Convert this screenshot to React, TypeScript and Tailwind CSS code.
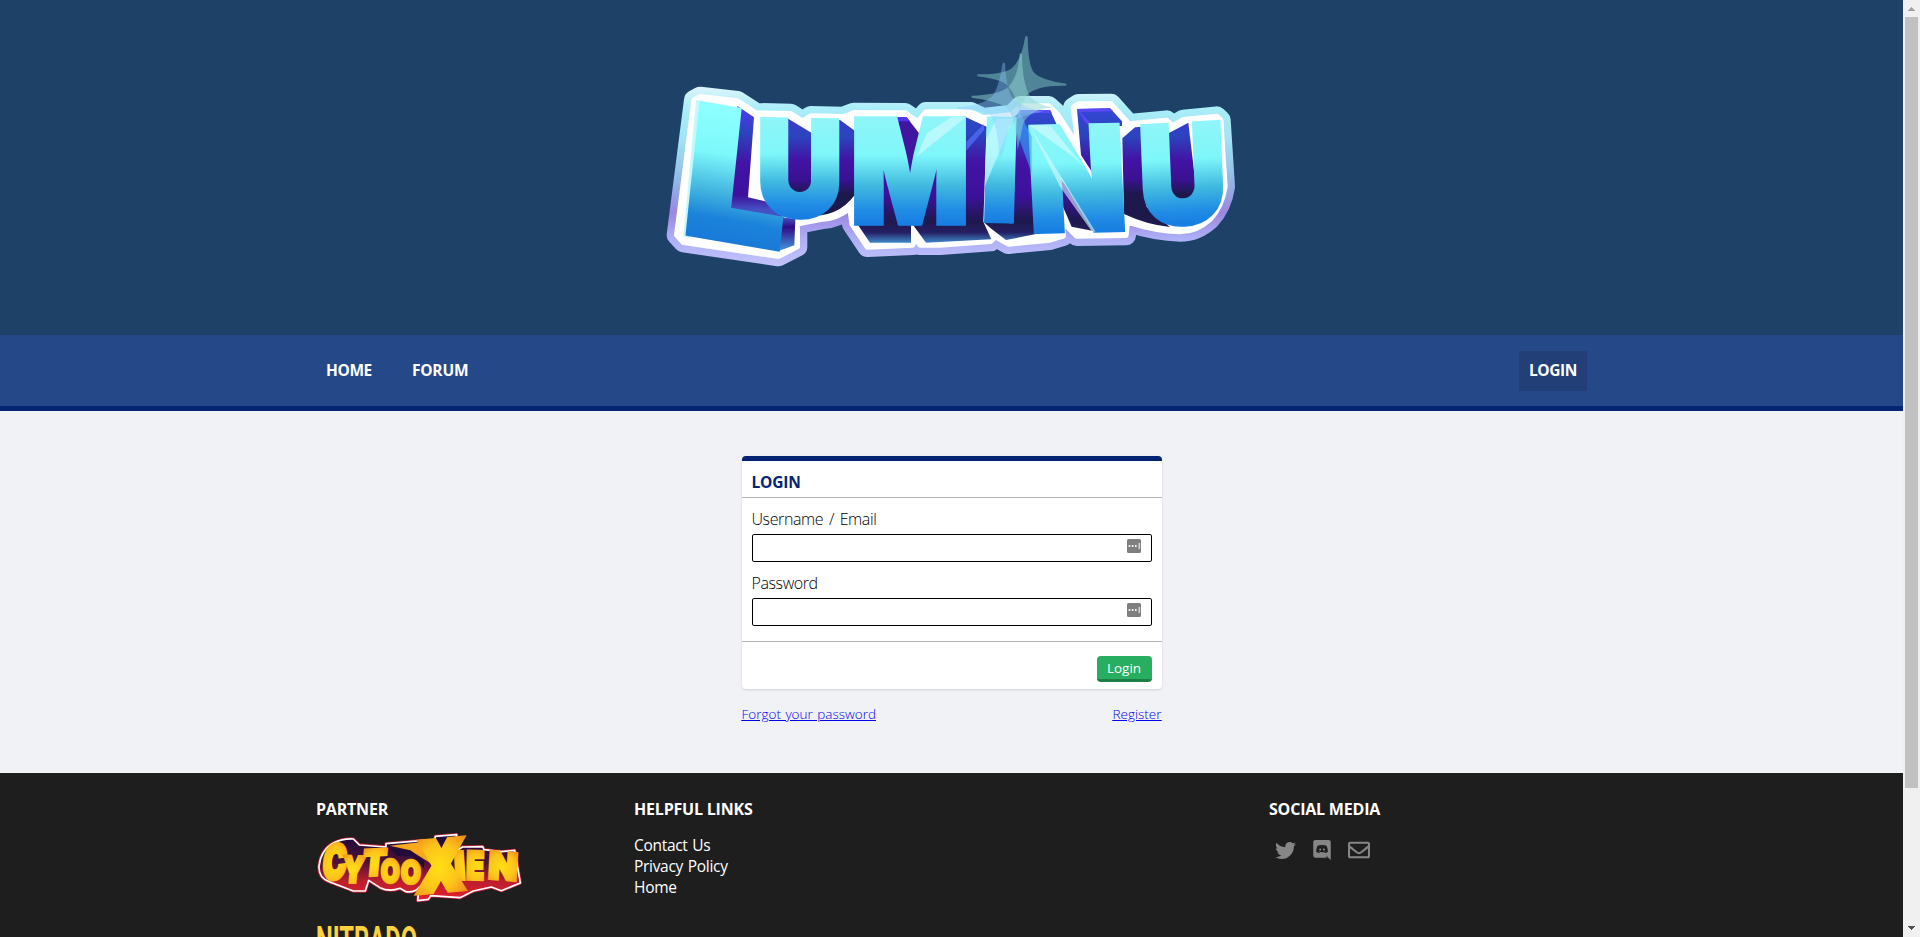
import { FaTwitter, FaRegEnvelope } from "react-icons/fa";

const PLATE =
  "M150 230 L262 243 L318 279 L422 281 L458 304 L482 288 L580 290 L612 278 L765 279 L803 305 L828 276 L962 276 L1000 294 L1085 284 L1112 258 L1196 258 L1222 282 L1285 380 L1270 262 L1285 252 L1383 251 L1437 312 L1550 301 L1568 318 L1600 299 L1700 289 L1712 300 L1725 500 Q1716 560 1680 598 Q1640 635 1590 635 Q1520 634 1432 606 L1428 646 L1280 648 L1236 604 L1240 648 L1200 660 L1075 672 L1036 650 L1022 664 L870 675 L810 675 L800 655 L788 675 L652 681 L606 612 L600 565 Q560 595 520 597 L442 612 L442 680 L385 709 L100 667 L80 645 L132 240 Z";

type Glyph = { c: string; m: string; fill: string };

const luminu: Glyph[] = [
  { c: "L", m: "matrix(0.96 0.165 -0.1 0.95 93 634)", fill: "url(#faceL)" },
  { c: "U", m: "matrix(0.64 0.01 0 0.71 321 586)", fill: "url(#face)" },
  { c: "M", m: "matrix(0.67 0 0 0.77 602 608)", fill: "url(#face)" },
  { c: "I", m: "matrix(0.68 0.01 -0.02 0.75 992 601)", fill: "url(#face)" },
  { c: "N", m: "matrix(0.69 -0.015 0.04 0.77 1141 634)", fill: "url(#face)" },
  { c: "U", m: "matrix(0.65 -0.035 0.03 0.73 1473 616)", fill: "url(#face)" },
];

function LuminuLogo() {
  return (
    <svg className="h-[260px] w-[600px] overflow-visible" viewBox="0 0 1800 780" role="img" aria-label="Luminu">
      <defs>
        <linearGradient id="rim" x1="0" y1="200" x2="0" y2="740" gradientUnits="userSpaceOnUse">
          <stop offset="0" stopColor="#dff4fb" />
          <stop offset=".12" stopColor="#a9eef8" />
          <stop offset=".3" stopColor="#a0e2f4" />
          <stop offset=".5" stopColor="#92bdea" />
          <stop offset=".7" stopColor="#9a86e0" />
          <stop offset=".85" stopColor="#aeb0f7" />
          <stop offset="1" stopColor="#c3c4fa" />
        </linearGradient>
        <linearGradient id="faceL" x1="0" y1="-404" x2="0" y2="0" gradientUnits="userSpaceOnUse">
          <stop offset="0" stopColor="#8dffff" />
          <stop offset=".35" stopColor="#7df8fb" />
          <stop offset=".65" stopColor="#42b4df" />
          <stop offset=".85" stopColor="#1b83db" />
          <stop offset="1" stopColor="#197bd8" />
        </linearGradient>
        <linearGradient id="face" x1="0" y1="-404" x2="0" y2="0" gradientUnits="userSpaceOnUse">
          <stop offset="0" stopColor="#8ff5f8" />
          <stop offset=".35" stopColor="#7ef7fa" />
          <stop offset=".65" stopColor="#3fb8e0" />
          <stop offset=".88" stopColor="#218ce5" />
          <stop offset="1" stopColor="#187fe2" />
        </linearGradient>
        <linearGradient id="side" x1="0" y1="260" x2="0" y2="670" gradientUnits="userSpaceOnUse">
          <stop offset="0" stopColor="#3546d8" />
          <stop offset=".2" stopColor="#2b45bd" />
          <stop offset=".4" stopColor="#4213a5" />
          <stop offset=".65" stopColor="#3d119c" />
          <stop offset=".84" stopColor="#1d194d" />
          <stop offset=".92" stopColor="#241f63" />
          <stop offset="1" stopColor="#3f8fd0" />
        </linearGradient>
        <linearGradient id="sideU" x1="0" y1="290" x2="0" y2="580" gradientUnits="userSpaceOnUse">
          <stop offset="0" stopColor="#3f36d0" />
          <stop offset=".2" stopColor="#2b45bd" />
          <stop offset=".45" stopColor="#4213a5" />
          <stop offset=".65" stopColor="#3a1191" />
          <stop offset=".8" stopColor="#1d194d" />
          <stop offset="1" stopColor="#1d194d" />
        </linearGradient>
        <linearGradient id="sideL" x1="0" y1="260" x2="0" y2="690" gradientUnits="userSpaceOnUse">
          <stop offset="0" stopColor="#5238f4" />
          <stop offset=".18" stopColor="#2b45bd" />
          <stop offset=".4" stopColor="#4213a5" />
          <stop offset=".62" stopColor="#3d119c" />
          <stop offset=".72" stopColor="#4552c4" />
          <stop offset=".77" stopColor="#4552c4" />
          <stop offset=".84" stopColor="#300b86" />
          <stop offset="1" stopColor="#4593d8" />
        </linearGradient>
      </defs>
      <path d={PLATE} fill="url(#rim)" stroke="url(#rim)" strokeWidth="60" strokeLinejoin="round" />
      <path d={PLATE} fill="#fff" stroke="#fff" strokeWidth="16" strokeLinejoin="round" />
      <g fill="url(#sideL)">
        <path d="M262 258 L312 292 L294 532 L350 545 L410 600 L220 572 Z" />
        <path d="M375 590 L436 596 L433 676 L388 692 Z" />
      </g>
      <g fill="url(#sideU)">
        <path d="M412 295 L484 338 V520 H405 Z" />
        <path d="M562 300 H570 L635 347 L627 505 Q580 588 490 587 L550 480 Z" />
        <path d="M1417 355 L1455 322 L1480 320 L1490 560 L1560 621 Q1490 614 1422 582 Z" />
        <path d="M1540 348 L1615 308 L1640 520 Q1595 570 1550 530 Z" />
      </g>
      <path d="M700 292 H770 L809 342 L782 470 Z" fill="#40159f" />
      <path d="M700 292 H770 L780 304 H715 Z" fill="#5432f0" />
      <g fill="url(#side)">
        <path d="M1281 267 L1380 265 L1416 304 L1416 318 L1330 318 L1335 470 L1293 405 Z" />
        <path d="M622 612 L706 440 L783 605 V668 H660 Z" />
        <path d="M860 440 L940 500 L940 288 L1010 320 L1000 605 L1024 658 L828 668 L787 612 Z" />
        <path d="M1090 293 L1116 270 L1200 270 L1222 318 L1140 318 L1170 640 L1068 660 L1022 625 L1000 605 L1086 610 Z" />
        <path d="M1228 470 L1345 636 L1265 620 L1230 540 Z" />
      </g>
      <path d="M1110 270 H1200 L1206 279 H1108 Z M1281 267 L1380 265 L1390 274 L1290 276 L1325 312 L1310 312 Z" fill="#5a48f5" />
      <path d="M138 240 L160 243 L120 654 L100 650 Z" fill="#c4f9fb" />
      <g fontFamily="Inter, 'Liberation Sans', sans-serif" fontWeight="900" fontSize="555">
        {luminu.map((g, i) => (
          <text key={i} transform={g.m} fill={g.fill} stroke={g.fill} strokeWidth="22">
            {g.c}
          </text>
        ))}
      </g>
      <g fill="#d9fbff" opacity=".6">
        <path d="M800 410 L947 292 H905 L830 340 Z" />
        <path d="M1004 500 L1090 296 H1040 L1008 360 Z" />
        <path d="M1138 316 H1200 L1310 450 L1270 410 Z" />
        <path d="M1140 320 L1337 636 L1325 634 L1230 500 Z" />
      </g>
      <path d="M1106 270 L1145 350 V460 L1098 330 Z" fill="#39a5ff" opacity=".6" />
      <path d="M949 365 L1002 312 V330 L949 392 Z" fill="#5572ff" opacity=".7" />
      <g fill="#8fd6d2" opacity=".45">
        <path d="M1126 48 L1133 50 Q1134 130 1150 155 Q1170 180 1250 191 L1248 197 Q1160 195 1130 225 L1108 270 Q1092 210 1065 190 Q1040 176 982 169 V163 Q1060 164 1085 145 Q1115 120 1126 48 Z" />
      </g>
      <path
        d="M1109 100 L1116 102 Q1117 190 1140 230 Q1165 256 1210 262 Q1140 268 1120 310 L1103 390 Q1096 290 1070 262 Q1030 240 965 233 V227 Q1050 224 1075 200 Q1105 170 1109 100 Z"
        fill="#8fd6d2"
        opacity=".5"
      />
      <path
        d="M1058 128 H1065 Q1068 200 1085 230 Q1110 262 1180 275 Q1100 285 1078 320 L1054 410 L1048 408 Q1042 310 1020 284 Q980 268 920 266 V262 Q1000 258 1030 225 Q1050 190 1058 128 Z"
        fill="#8cc8ff"
        opacity=".38"
      />
    </svg>
  );
}

const cyto: { c: string; m: string }[] = [
  { c: "C", m: "matrix(0.96 -0.14 -0.06 1.42 67 347)" },
  { c: "Y", m: "matrix(0.86 0.02 -0.1 1.08 124 352)" },
  { c: "T", m: "matrix(1.02 -0.04 -0.1 1.08 185 333)" },
  { c: "O", m: "matrix(0.74 0 0 0.98 242 354)" },
  { c: "O", m: "matrix(0.78 0 0 1 302 356)" },
  { c: "I", m: "matrix(1.1 0.03 0.08 1.15 466 343)" },
  { c: "E", m: "matrix(0.88 0.02 -0.02 1.16 498 343)" },
  { c: "N", m: "matrix(1.14 0.1 -0.06 1.12 563 340)" },
  { c: "X", m: "matrix(1.82 -0.16 -0.02 2.08 351 383)" },
];

const CYTO_PLATE =
  "M160 222 L178 240 L258 246 L258 236 L372 226 L380 232 L404 230 L406 214 L470 209 L462 262 L488 246 L548 245 L552 254 L604 260 L644 256 L661 354 L604 377 L574 366 L520 378 L480 398 L392 392 L385 403 L353 407 L358 366 Q344 384 318 380 L300 370 Q268 382 240 368 L206 346 L196 378 L160 378 L88 350 Q56 340 57 304 Q62 256 100 234 Q130 220 160 222 Z";

function CytooxienLogo() {
  return (
    <svg className="h-[70px] w-[208px] overflow-visible" viewBox="48 204 624 210" role="img" aria-label="Cytooxien">
      <defs>
        <radialGradient id="gold" cx="36" cy="-34" r="60" gradientUnits="userSpaceOnUse">
          <stop offset="0" stopColor="#ffdf14" />
          <stop offset=".55" stopColor="#fdc41a" />
          <stop offset="1" stopColor="#f08a1d" />
        </radialGradient>
        <linearGradient id="red" x1="0" y1="220" x2="0" y2="400" gradientUnits="userSpaceOnUse">
          <stop offset="0" stopColor="#220a3a" />
          <stop offset=".4" stopColor="#4c1238" />
          <stop offset=".7" stopColor="#b81d2e" />
          <stop offset="1" stopColor="#e4202c" />
        </linearGradient>
      </defs>
      <path d={CYTO_PLATE} fill="#c8202f" stroke="#b91c34" strokeWidth="10" strokeLinejoin="round" />
      <path d={CYTO_PLATE} fill="url(#red)" stroke="#fff" strokeWidth="5" strokeLinejoin="round" />
      <path d="M270 242 L372 230 L400 300 L330 256 Z" fill="#f9a91b" />
      <path d="M272 250 L330 256 L372 288 V310 L340 275 L290 272 Z" fill="#220a3a" />
      <g
        fontFamily="Inter, 'Liberation Sans', sans-serif"
        fontWeight="900"
        fontSize="100"
        fill="url(#gold)"
        stroke="url(#gold)"
        strokeWidth="8"
      >
        {cyto.map((g, i) => (
          <text key={i} transform={g.m}>
            {g.c}
          </text>
        ))}
      </g>
    </svg>
  );
}

function DiscordIcon() {
  return (
    <svg className="h-5 w-[18px]" viewBox="0 0 448 512" fill="currentColor">
      <path d="M297.216 243.2c0 15.616-11.52 28.416-26.112 28.416-14.336 0-26.112-12.8-26.112-28.416s11.52-28.416 26.112-28.416c14.592 0 26.112 12.8 26.112 28.416zm-119.552-28.416c-14.592 0-26.112 12.8-26.112 28.416s11.776 28.416 26.112 28.416c14.592 0 26.112-12.8 26.112-28.416.256-15.616-11.52-28.416-26.112-28.416zM448 52.736V512c-64.494-56.994-43.868-38.128-118.784-107.776l13.568 47.36H52.48C23.552 451.584 0 428.032 0 398.848V52.736C0 23.552 23.552 0 52.48 0h343.04C424.448 0 448 23.552 448 52.736zm-72.96 242.688c0-82.432-36.864-149.248-36.864-149.248-36.864-27.648-71.936-26.88-71.936-26.88l-3.584 4.096c43.52 13.312 63.744 32.512 63.744 32.512-60.811-33.329-132.244-33.335-191.232-7.424-9.472 4.352-15.104 7.424-15.104 7.424s21.248-20.224 67.328-33.536l-2.56-3.072s-35.072-.768-71.936 26.88c0 0-36.864 66.816-36.864 149.248 0 0 21.504 37.12 78.08 38.912 0 0 9.472-11.52 17.152-21.248-32.512-9.728-44.8-30.208-44.8-30.208 3.766 2.636 9.976 6.053 10.496 6.4 43.21 24.198 104.588 32.126 159.744 8.96 8.96-3.328 18.944-8.192 29.44-15.104 0 0-12.8 20.992-46.336 30.464 7.68 9.728 16.896 20.736 16.896 20.736 56.576-1.792 78.336-38.912 78.336-38.912z" />
    </svg>
  );
}

function PasswordManagerIcon() {
  return (
    <svg className="mt-1 size-3.5" viewBox="0 0 14 14">
      <rect width="14" height="14" rx="1.5" fill="#7f7f7f" />
      <circle cx="2.5" cy="7" r="1" fill="#fff" />
      <circle cx="5.6" cy="7" r="1" fill="#fff" />
      <circle cx="8.8" cy="7" r="1" fill="#fff" />
      <path d="M12.2 4v6" stroke="#fff" strokeWidth="1" />
    </svg>
  );
}

function Field({ label }: { label: string }) {
  return (
    <label className="block h-16">
      <span className="block h-[27px] text-[16px] leading-6 font-light tracking-[-0.4px] text-black [word-spacing:2px]">
        {label}
      </span>
      <span className="flex h-7 justify-end rounded-[2px] border border-black bg-white pr-2.5">
        <PasswordManagerIcon />
      </span>
    </label>
  );
}

function FooterHeading({ children }: { children: string }) {
  return (
    <h2 className="h-[21px] text-[16px] leading-[21px] font-bold tracking-[-0.2px] whitespace-nowrap">{children}</h2>
  );
}

function Scrollbar() {
  return (
    <div className="flex h-full w-[17px] flex-col items-center bg-[#f0f0f0]">
      <svg className="h-[17px] w-[17px]" viewBox="0 0 17 17" shapeRendering="crispEdges">
        <path d="M5 11h7v-1h-1v-1h-1v-1h-1v-1h-1v1h-1v1h-1v1h-1z" fill="#a3a3a3" />
      </svg>
      <div className="h-[771px] w-[13px] bg-[#c1c1c1]" />
      <div className="flex-1" />
      <svg className="h-[17px] w-[17px]" viewBox="0 0 17 17" shapeRendering="crispEdges">
        <path d="M5 6h7v1h-1v1h-1v1h-1v1h-1v-1h-1v-1h-1v-1h-1z" fill="#505050" />
      </svg>
    </div>
  );
}

export default function App() {
  return (
    <div className="flex h-[937px] w-[1920px] overflow-hidden font-['Open_Sans','Noto_Sans',sans-serif]">
      <div className="flex h-full w-[1903px] flex-col overflow-hidden bg-[#f0f2f6]">
        <header className="flex h-[335px] shrink-0 justify-center bg-[#1e4167] pt-5">
          <div className="h-[260px] w-[603px]">
            <LuminuLogo />
          </div>
        </header>
        <nav className="h-[76px] shrink-0 border-b-[5px] border-[#052573] bg-[#254988] px-[316px]">
          <div className="flex h-full items-center text-[15.5px] font-bold tracking-[-0.4px] text-white">
            <a className="flex h-10 items-center px-2.5">HOME</a>
            <a className="ml-5 flex h-10 items-center px-2.5 tracking-[-0.2px]">FORUM</a>
            <a className="ml-auto flex h-10 w-[68px] items-center justify-center bg-[#233f78]">LOGIN</a>
          </div>
        </nav>
        <main className="flex h-[362px] shrink-0 flex-col items-center pt-[45px]">
          <section className="h-[233px] w-[420px] rounded border-t-[5px] border-[#052573] bg-white shadow-sm">
            <h1 className="h-[37px] border-b border-[#b4b4b4] px-2.5 pt-[11px] text-[15.5px] leading-[21px] font-bold tracking-[-0.2px] text-[#052573]">
              LOGIN
            </h1>
            <div className="h-[143px] px-2.5 pt-[9px]">
              <Field label="Username / Email" />
              <Field label="Password" />
            </div>
            <div className="flex justify-end border-t border-[#b4b4b4] px-2.5 pt-3.5">
              <button className="h-[26px] w-[55px] rounded border-b-[3px] border-[#1d7f46] bg-[#27ae60] text-[13.5px] leading-[22px] text-white">
                Login
              </button>
            </div>
          </section>
          <div className="mt-3.5 flex w-[420px] justify-between text-[13.5px] leading-[22px] font-light text-[#0000ee] underline [word-spacing:1px]">
            <a>Forgot your password</a>
            <a>Register</a>
          </div>
        </main>
        <footer className="grid h-[164px] shrink-0 grid-cols-[318px_318px_317px_318px] bg-[#1e1e1e] px-[316px] pt-[26px] text-white">
          <div>
            <FooterHeading>PARTNER</FooterHeading>
            <div className="mt-[13px]">
              <CytooxienLogo />
            </div>
            <svg className="mt-[22px] h-10 w-[102px]" viewBox="0 0 102 40">
              <text
                x="0"
                y="29"
                textLength="101"
                lengthAdjust="spacingAndGlyphs"
                fontFamily="Roboto, sans-serif"
                fontWeight="700"
                fontSize="38"
                fill="#fbd33e"
              >
                NITRADO
              </text>
            </svg>
          </div>
          <div>
            <FooterHeading>HELPFUL LINKS</FooterHeading>
            <ul className="mt-[15px] text-[15.5px] leading-[21px] tracking-[-0.3px] [word-spacing:1px]">
              <li>Contact Us</li>
              <li>Privacy Policy</li>
              <li>Home</li>
            </ul>
          </div>
          <div />
          <div>
            <FooterHeading>SOCIAL MEDIA</FooterHeading>
            <div className="mt-5 flex h-5 items-center gap-[17px] pl-1.5 text-[#868686]">
              <FaTwitter className="size-[21px]" />
              <DiscordIcon />
              <FaRegEnvelope className="size-[22px]" />
            </div>
          </div>
        </footer>
      </div>
      <Scrollbar />
    </div>
  );
}
